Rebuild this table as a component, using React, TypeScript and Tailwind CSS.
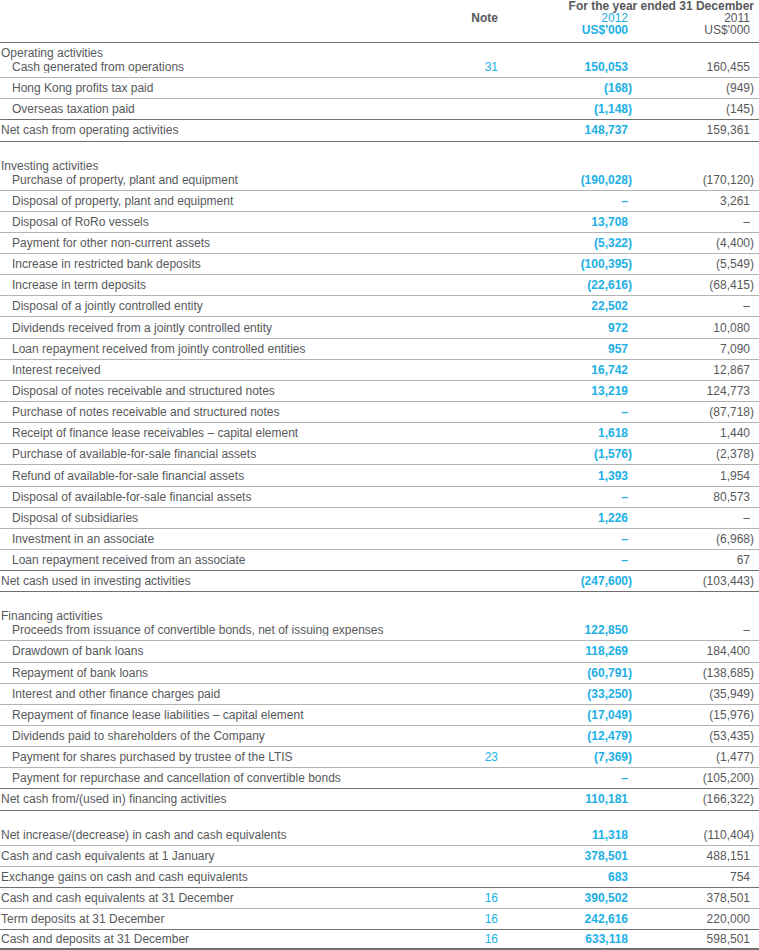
type Line = "light" | "dark" | "thick"

type Row = {
  label: string
  note?: string
  a: string
  b: string
  line?: Line
  total?: boolean
}

type Section = {
  heading?: string
  gap: boolean
  rows: Row[]
}

const sections: Section[] = [
  {
    heading: "Operating activities",
    gap: false,
    rows: [
      { label: "Cash generated from operations", note: "31", a: "150,053", b: "160,455" },
      { label: "Hong Kong profits tax paid", a: "(168)", b: "(949)" },
      { label: "Overseas taxation paid", a: "(1,148)", b: "(145)", line: "dark" },
      { label: "Net cash from operating activities", a: "148,737", b: "159,361", line: "dark", total: true },
    ],
  },
  {
    heading: "Investing activities",
    gap: true,
    rows: [
      { label: "Purchase of property, plant and equipment", a: "(190,028)", b: "(170,120)" },
      { label: "Disposal of property, plant and equipment", a: "–", b: "3,261" },
      { label: "Disposal of RoRo vessels", a: "13,708", b: "–" },
      { label: "Payment for other non-current assets", a: "(5,322)", b: "(4,400)" },
      { label: "Increase in restricted bank deposits", a: "(100,395)", b: "(5,549)" },
      { label: "Increase in term deposits", a: "(22,616)", b: "(68,415)" },
      { label: "Disposal of a jointly controlled entity", a: "22,502", b: "–" },
      { label: "Dividends received from a jointly controlled entity", a: "972", b: "10,080" },
      { label: "Loan repayment received from jointly controlled entities", a: "957", b: "7,090" },
      { label: "Interest received", a: "16,742", b: "12,867" },
      { label: "Disposal of notes receivable and structured notes", a: "13,219", b: "124,773" },
      { label: "Purchase of notes receivable and structured notes", a: "–", b: "(87,718)" },
      { label: "Receipt of finance lease receivables – capital element", a: "1,618", b: "1,440" },
      { label: "Purchase of available-for-sale financial assets", a: "(1,576)", b: "(2,378)" },
      { label: "Refund of available-for-sale financial assets", a: "1,393", b: "1,954" },
      { label: "Disposal of available-for-sale financial assets", a: "–", b: "80,573" },
      { label: "Disposal of subsidiaries", a: "1,226", b: "–" },
      { label: "Investment in an associate", a: "–", b: "(6,968)" },
      { label: "Loan repayment received from an associate", a: "–", b: "67", line: "dark" },
      { label: "Net cash used in investing activities", a: "(247,600)", b: "(103,443)", line: "dark", total: true },
    ],
  },
  {
    heading: "Financing activities",
    gap: true,
    rows: [
      { label: "Proceeds from issuance of convertible bonds, net of issuing expenses", a: "122,850", b: "–" },
      { label: "Drawdown of bank loans", a: "118,269", b: "184,400" },
      { label: "Repayment of bank loans", a: "(60,791)", b: "(138,685)" },
      { label: "Interest and other finance charges paid", a: "(33,250)", b: "(35,949)" },
      { label: "Repayment of finance lease liabilities – capital element", a: "(17,049)", b: "(15,976)" },
      { label: "Dividends paid to shareholders of the Company", a: "(12,479)", b: "(53,435)" },
      { label: "Payment for shares purchased by trustee of the LTIS", note: "23", a: "(7,369)", b: "(1,477)" },
      { label: "Payment for repurchase and cancellation of convertible bonds", a: "–", b: "(105,200)", line: "dark" },
      { label: "Net cash from/(used in) financing activities", a: "110,181", b: "(166,322)", line: "dark", total: true },
    ],
  },
  {
    gap: true,
    rows: [
      { label: "Net increase/(decrease) in cash and cash equivalents", a: "11,318", b: "(110,404)", total: true },
      { label: "Cash and cash equivalents at 1 January", a: "378,501", b: "488,151", total: true },
      { label: "Exchange gains on cash and cash equivalents", a: "683", b: "754", line: "dark", total: true },
      { label: "Cash and cash equivalents at 31 December", note: "16", a: "390,502", b: "378,501", total: true },
      { label: "Term deposits at 31 December", note: "16", a: "242,616", b: "220,000", line: "dark", total: true },
      { label: "Cash and deposits at 31 December", note: "16", a: "633,118", b: "598,501", line: "thick", total: true },
    ],
  },
]

function Val({ v }: { v: string }) {
  const neg = v.startsWith("(")
  return (
    <span className="whitespace-nowrap">
      {neg ? v.slice(0, -1) : v}
      <span className="inline-block w-[4px] text-left">{neg ? ")" : ""}</span>
    </span>
  )
}

const lineClass: Record<Line, string> = {
  light: "border-b border-[#b3b3b3]",
  dark: "border-b border-[#6f6f6f]",
  thick: "border-b-[3px] border-[#6f6f6f]",
}

function Cells({ r }: { r: Row }) {
  return (
    <>
      <div className={`truncate ${r.total ? "pl-[1px]" : "pl-[12px]"}`}>{r.label}</div>
      <div className="pr-[4px] text-right text-[#20b0e6]">{r.note}</div>
      <div className="pr-[4px] text-right font-bold text-[#20b0e6]">
        <Val v={r.a} />
      </div>
      <div className="pr-[5px] text-right">
        <Val v={r.b} />
      </div>
    </>
  )
}

const cols = "grid grid-cols-[1fr_58px_134px_123px]"

export default function App() {
  return (
    <div className="w-[759px] bg-white text-[12px] text-[#58595b] [font-family:'Liberation_Sans',Arial,sans-serif]">
      <div className={`${cols} h-[43px] grid-rows-[12px_12px_12px] content-start border-b border-[#6f6f6f] leading-[12px]`}>
        <div className="col-span-2 col-start-3 row-start-1 whitespace-nowrap pr-[5px] text-right font-bold">
          For the year ended 31 December
        </div>
        <div className="col-start-2 row-start-2 pr-[4px] text-right font-bold">Note</div>
        <div className="col-start-3 row-start-2 pr-[8px] text-right text-[#20b0e6]">2012</div>
        <div className="col-start-4 row-start-2 pr-[9px] text-right">2011</div>
        <div className="col-start-3 row-start-3 pr-[8px] text-right font-bold text-[#20b0e6]">US$'000</div>
        <div className="col-start-4 row-start-3 pr-[9px] text-right">US$'000</div>
      </div>

      {sections.map((s, si) => (
        <div key={si} className={s.gap ? "pt-[14px]" : ""}>
          {s.rows.map((r, ri) => {
            const line = lineClass[r.line ?? "light"]
            if (ri === 0 && s.heading) {
              return (
                <div key={ri} className={line}>
                  <div className="h-[17px] pl-[1px] pt-[3px] leading-[14px]">{s.heading}</div>
                  <div className={`${cols} h-[17.1px] items-start pt-[1px] leading-[12px]`}>
                    <Cells r={r} />
                  </div>
                </div>
              )
            }
            return (
              <div key={ri} className={`${cols} h-[21.15px] items-center leading-[14px] ${line}`}>
                <Cells r={r} />
              </div>
            )
          })}
        </div>
      ))}
    </div>
  )
}
